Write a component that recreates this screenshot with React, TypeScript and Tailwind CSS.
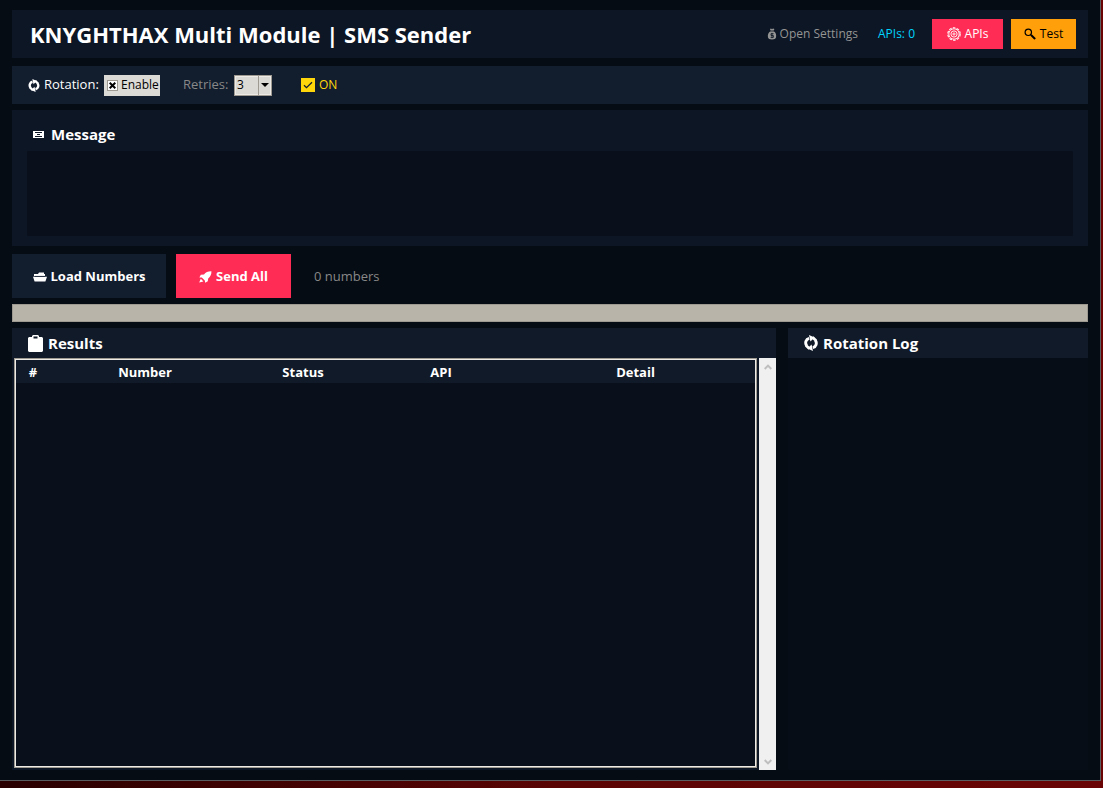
import { useState } from "react";
import type { ReactNode } from "react";

type IconProps = { className?: string };

function RotateIcon({ className }: IconProps) {
  return (
    <svg viewBox="0 0 14 16" className={className} aria-hidden="true">
      <path d="M5.2 3.4C1.8 4.2 0.8 8 2.6 10.6" fill="none" stroke="currentColor" strokeWidth="2.9" />
      <path d="M8.8 12.6C12.2 11.8 13.2 8 11.4 5.4" fill="none" stroke="currentColor" strokeWidth="2.9" />
      <path d="M5 0 10.6 2.6 6.4 6.4Z" fill="currentColor" />
      <path d="M9 16 3.4 13.4 7.6 9.6Z" fill="currentColor" />
      <path d="M8.4 2.2 12 5.6M5.6 13.8 2 10.4" stroke="currentColor" strokeWidth="2.8" />
    </svg>
  );
}

function MoneyBagIcon({ className }: IconProps) {
  return (
    <svg viewBox="0 0 10 12" className={className} aria-hidden="true">
      <path
        d="M3 1 4 0.6 5 1.2 6 0.4 7.4 1 6.6 3 C8.8 4.6 9.6 6.8 9 9.6 C8.6 11 7.6 11.4 5 11.4 C2.4 11.4 1.4 11 1 9.6 C0.4 6.8 1.4 4.4 3.6 3 Z"
        fill="currentColor"
      />
      <path d="M2.4 3h5.2M6.6 5.7H4v1.8h2.4v1.9H3.6M5 4.9v5.3" fill="none" stroke="#0d1624" strokeWidth="0.8" />
    </svg>
  );
}

function GearIcon({ className }: IconProps) {
  return (
    <svg viewBox="0 0 14 14" className={className} fill="none" stroke="currentColor" aria-hidden="true">
      <circle cx="7" cy="7" r="5.2" strokeWidth="0.9" />
      <circle cx="7" cy="7" r="6.2" strokeWidth="1.1" strokeDasharray="2.6 1.3" />
      <circle cx="7" cy="7" r="3.1" strokeWidth="0.9" />
      <circle cx="7" cy="7" r="1.1" strokeWidth="0.9" />
    </svg>
  );
}

function SearchIcon({ className }: IconProps) {
  return (
    <svg viewBox="0 0 12 12" className={className} fill="none" stroke="currentColor" aria-hidden="true">
      <circle cx="4.3" cy="4.3" r="3.2" strokeWidth="1.2" />
      <path d="m6.6 6.6 1 1" strokeWidth="1.2" />
      <path d="m7.6 7.6 3 2.8" strokeWidth="2" strokeLinecap="round" />
    </svg>
  );
}

function EnvelopeIcon({ className }: IconProps) {
  return (
    <svg viewBox="0 0 11 7" className={className} aria-hidden="true">
      <path d="M0 0h11v7H0z" fill="currentColor" />
      <path d="M2 1h1v1H2zM8 1h1v1H8zM2 5h1v1H2zM8 5h1v1H8zM3 1h5v1H3zM3 5h5v1H3zM4 3h3v1H4z" fill="#0d1624" />
    </svg>
  );
}

function FolderIcon({ className }: IconProps) {
  return (
    <svg viewBox="0 0 14 10" className={className} fill="currentColor" aria-hidden="true">
      <path d="M1 4V2h4l1-1.6h5V2h1v2Z" />
      <path d="M0 4.8h14L12.4 9.6H1.6Z" />
      <path d="M2 4.4h10" stroke="#121d2e" strokeWidth="0.7" />
    </svg>
  );
}

function RocketIcon({ className }: IconProps) {
  return (
    <svg viewBox="0 0 13 12" className={className} fill="currentColor" aria-hidden="true">
      <path d="M12.4 0.3C9 0.2 6.8 1.4 5 3.4L1.8 3.8 0.4 6.4l2.4 0.2 3 3L6.2 11.8 8.8 10.2 9.2 7.4C11.4 5.6 12.6 3.6 12.4 0.3Z" />
      <path d="M1.8 7.8 0.2 11.6 4.4 10.4Z" />
    </svg>
  );
}

function ClipboardIcon({ className }: IconProps) {
  return (
    <svg viewBox="0 0 15 17" className={className} fill="currentColor" aria-hidden="true">
      <path d="M1 2h3V1l1-1h5l1 1v1h3l1 1v13l-1 1H1l-1-1V3Zm4.5-.6v2h4v-2Z" fillRule="evenodd" />
    </svg>
  );
}

function ChevronIcon({ className }: IconProps) {
  return (
    <svg viewBox="0 0 8 6" className={className} fill="none" stroke="currentColor" strokeWidth="2" aria-hidden="true">
      <path d="M0.7 5 4 1.6 7.3 5" />
    </svg>
  );
}

function PanelTitle({ icon, children }: { icon: ReactNode; children: ReactNode }) {
  return (
    <h2 className="flex h-[30px] items-center gap-[5px] bg-[#111a28] px-4 text-[15px] font-bold">
      {icon}
      {children}
    </h2>
  );
}

function Header() {
  return (
    <header className="flex h-12 items-center justify-between bg-[#0d1624] pr-3 pl-[18px]">
      <h1 className="text-[22px] font-bold">KNYGHTHAX Multi Module | SMS Sender</h1>
      <div className="flex items-center text-[12px]">
        <span className="mr-5 flex items-center gap-[3px] text-[#949494]">
          <MoneyBagIcon className="h-3 w-2.5" />
          Open Settings
        </span>
        <span className="mr-[17px] text-[#00d4ff]">APIs: 0</span>
        <button className="mr-2 flex h-[30px] w-[71px] items-center justify-center gap-1 bg-[#ff2d55]">
          <GearIcon className="size-3.5" />
          APIs
        </button>
        <button className="flex h-[30px] w-[65px] items-center justify-center gap-1 bg-[#ff9f0a] text-black">
          <SearchIcon className="size-3" />
          Test
        </button>
      </div>
    </header>
  );
}

function Options() {
  const [enabled, setEnabled] = useState(true);
  const [on, setOn] = useState(true);

  return (
    <section className="mt-2 flex h-[38px] items-center bg-[#121d2e] px-4 text-[13px]">
      <RotateIcon className="mr-1 h-[13px] w-3" />
      <span className="w-[60px]">Rotation:</span>
      <label className="mr-[23px] flex h-[21px] w-14 items-center gap-[3px] bg-[#dcdad5] pl-[3px] text-[12px] text-black">
        <span className="grid size-[11px] shrink-0 place-items-center">
          <input
            type="checkbox"
            checked={enabled}
            onChange={(e) => setEnabled(e.target.checked)}
            className="peer col-start-1 row-start-1 size-[11px] appearance-none border border-[#9e9a91] bg-white"
          />
          <svg viewBox="0 0 7 7" className="pointer-events-none col-start-1 row-start-1 hidden size-[7px] peer-checked:block">
            <path d="m0.7 0.7 5.6 5.6M6.3 0.7 0.7 6.3" stroke="#000" strokeWidth="2" />
          </svg>
        </span>
        Enable
      </label>
      <label htmlFor="retries" className="w-[51px] text-[#888888]">
        Retries:
      </label>
      <span className="mr-[29px] grid h-[21px] w-[38px] border border-[#9e9a91] bg-[#dcdad5] text-black">
        <select
          id="retries"
          defaultValue="3"
          className="col-start-1 row-start-1 appearance-none border border-[#eeebe7] pl-px text-[12px] leading-none"
        >
          <option>1</option>
          <option>2</option>
          <option>3</option>
          <option>4</option>
          <option>5</option>
        </select>
        <span className="pointer-events-none col-start-1 row-start-1 flex w-[13px] items-center justify-center justify-self-end border-l border-[#9e9a91]">
          <svg viewBox="0 0 8 4" className="h-1 w-2">
            <path d="M0 0h8L4 4Z" />
          </svg>
        </span>
      </span>
      <label className="flex items-center gap-1 text-[12px] text-[#ffd60a]">
        <span className="grid size-3.5 place-items-center">
          <input
            type="checkbox"
            checked={on}
            onChange={(e) => setOn(e.target.checked)}
            className="peer col-start-1 row-start-1 size-3.5 appearance-none bg-[#ffd60a]"
          />
          <svg viewBox="0 0 10 8" className="pointer-events-none col-start-1 row-start-1 hidden h-2 w-2.5 peer-checked:block">
            <path d="M1 4.2 3.5 6.6 9 1.2" fill="none" stroke="#121d2e" strokeWidth="1.3" />
          </svg>
        </span>
        ON
      </label>
    </section>
  );
}

function Message() {
  return (
    <section className="mt-1.5 bg-[#0d1624] px-[15px] pt-3 pb-2.5">
      <label htmlFor="message" className="flex h-6 items-center gap-[7px] pl-1.5 text-[15px] font-bold">
        <EnvelopeIcon className="h-[7px] w-[11px]" />
        Message
      </label>
      <textarea id="message" className="mt-[5px] block h-[85px] w-full resize-none bg-[#0a0f1c] p-2 text-[13px] outline-none" />
    </section>
  );
}

function Actions() {
  return (
    <div className="mt-2 flex h-11 items-stretch text-[13px] font-bold">
      <button className="mr-2.5 flex w-[154px] items-center justify-center gap-1 bg-[#121d2e] pt-0.5">
        <FolderIcon className="h-2.5 w-3.5" />
        Load Numbers
      </button>
      <button className="mr-[23px] flex w-[115px] items-center justify-center gap-1 bg-[#ff2d55] pt-0.5">
        <RocketIcon className="h-3 w-[13px]" />
        Send All
      </button>
      <span className="flex items-center pt-0.5 font-normal text-[#888888]">0 numbers</span>
    </div>
  );
}

function Results() {
  return (
    <section className="flex min-w-0 flex-1 flex-col bg-[#0d1624]">
      <PanelTitle icon={<ClipboardIcon className="h-[17px] w-[15px]" />}>Results</PanelTitle>
      <div className="flex flex-1">
        <div className="mb-0.5 ml-0.5 flex-1 border border-[#9e9a91]">
          <div className="h-full border border-[#eeebe7] bg-[#0a0f1c]">
            <table className="w-full table-fixed text-[13px]">
              <thead>
                <tr className="h-[23px] bg-[#111a28]">
                  <th className="w-[34px] pt-0.5">#</th>
                  <th className="w-[190px] pt-0.5">Number</th>
                  <th className="w-[126px] pt-0.5">Status</th>
                  <th className="w-[150px] pt-0.5">API</th>
                  <th className="pt-0.5">Detail</th>
                </tr>
              </thead>
              <tbody />
            </table>
          </div>
        </div>
        <div className="ml-0.5 flex w-[17px] flex-col items-center justify-between bg-[#f0f0f0] text-[#bfbfbf]">
          <button aria-label="Scroll up" className="flex h-[17px] w-full items-center justify-center">
            <ChevronIcon className="h-1.5 w-2" />
          </button>
          <button aria-label="Scroll down" className="flex h-[17px] w-full items-center justify-center">
            <ChevronIcon className="h-1.5 w-2 rotate-180" />
          </button>
        </div>
      </div>
    </section>
  );
}

export default function App() {
  return (
    <div className="flex min-h-screen flex-col bg-gradient-to-r from-[#2a0000] via-[#5a0404] to-[#6a0404] pr-0.5 pb-[7px] font-['Open_Sans',sans-serif] text-white">
      <main className="flex flex-1 flex-col border-r border-b border-[#5a5d60] bg-[#050c13] px-3 py-2.5">
        <Header />
        <Options />
        <Message />
        <Actions />
        <div role="progressbar" aria-valuenow={0} className="mt-1.5 h-[18px] border border-[#9e9a91] bg-[#b9b4a9]" />
        <div className="mt-1.5 flex flex-1 gap-3">
          <Results />
          <section className="w-[300px] bg-[#060d16]">
            <PanelTitle icon={<RotateIcon className="h-4 w-3.5" />}>Rotation Log</PanelTitle>
          </section>
        </div>
      </main>
    </div>
  );
}
